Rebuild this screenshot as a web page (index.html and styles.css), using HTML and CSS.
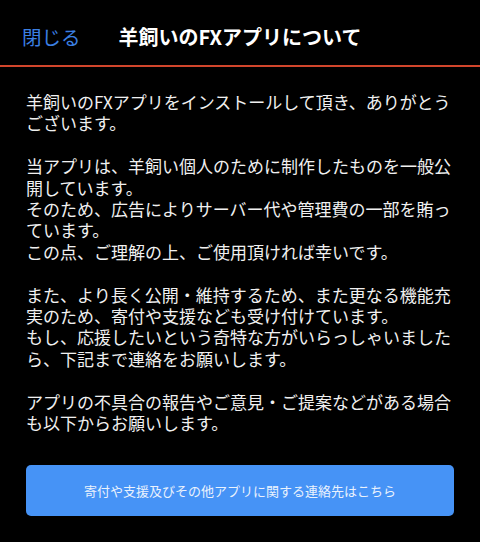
FILE: index.html
```html
<!DOCTYPE html>
<html lang="ja">
<head>
<meta charset="utf-8">
<link rel="stylesheet" href="styles.css">
</head>
<body>
<header class="bar">
  <span class="close">閉じる</span>
  <h1 class="title">羊飼いのFXアプリについて</h1>
  <span class="spacer"></span>
</header>
<main class="content">
  <p>羊飼いのFXアプリをインストールして頂き、ありがとう<br>ございます。</p>
  <p>当アプリは、羊飼い個人のために制作したものを一般公<br>開しています。<br>そのため、広告によりサーバー代や管理費の一部を賄っ<br>ています。<br>この点、ご理解の上、ご使用頂ければ幸いです。</p>
  <p>また、より長く公開・維持するため、また更なる機能充<br>実のため、寄付や支援なども受け付けています。<br>もし、応援したいという奇特な方がいらっしゃいました<br>ら、下記まで連絡をお願いします。</p>
  <p>アプリの不具合の報告やご意見・ご提案などがある場合<br>も以下からお願いします。</p>
  <button class="contact">寄付や支援及びその他アプリに関する連絡先はこちら</button>
</main>
</body>
</html>
```

FILE: styles.css
```css
html, body {
  margin: 0;
  padding: 0;
  background: #000;
}
body {
  width: 480px;
  height: 542px;
  overflow: hidden;
  font-family: "Noto Sans CJK JP", "Noto Sans", sans-serif;
  color: #f0f0f0;
}
.bar {
  display: grid;
  grid-template-columns: 1fr auto 1fr;
  align-items: center;
  height: 67px;
  padding: 0 22px;
  box-sizing: border-box;
  border-bottom: 2px solid #d2462c;
}
.close {
  font-size: 19.5px;
  color: #3b7fe2;
  line-height: 1;
  padding-top: 8px;
}
.title {
  margin: 0;
  font-size: 20px;
  font-weight: 700;
  color: #fff;
  line-height: 1;
  padding-top: 8px;
}
.content {
  padding: 24px 26px 0;
}
.content p {
  margin: 0 0 21.4px;
  font-size: 17px;
  line-height: 21.4px;
  white-space: nowrap;
}
.content p:last-of-type {
  margin-bottom: 0;
}
.contact {
  display: block;
  width: 100%;
  height: 51px;
  margin-top: 32px;
  border: none;
  border-radius: 5px;
  background: #4693f6;
  color: #eaf2fd;
  font-family: inherit;
  font-size: 13px;
  line-height: 1;
}
```
